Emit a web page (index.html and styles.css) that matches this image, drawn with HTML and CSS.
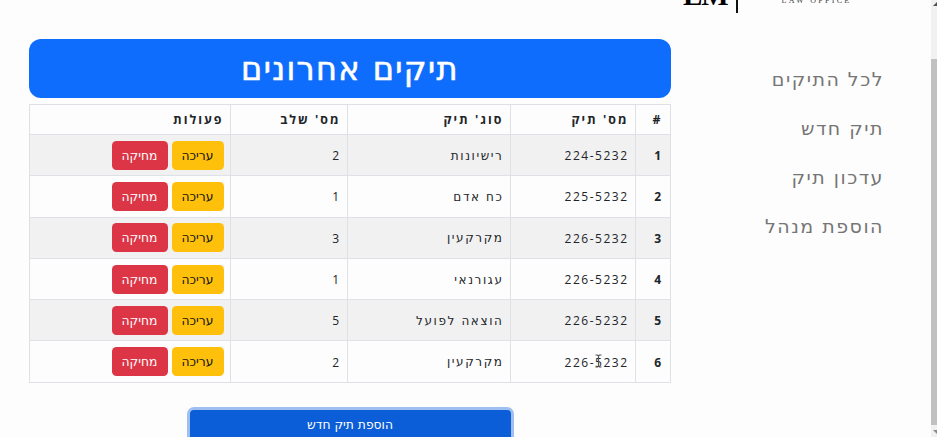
FILE: index.html
```html
<!DOCTYPE html>
<html lang="he" dir="rtl">
<head>
<meta charset="utf-8">
<title>תיקים אחרונים</title>
<link rel="stylesheet" href="styles.css">
</head>
<body>
<div class="viewport">
  <div class="page">
    <aside class="sidebar">
      <div class="logo" dir="ltr">
        <span class="logo-mark">LM</span>
        <span class="logo-line"></span>
        <span class="logo-sub">LAW OFFICE</span>
      </div>
      <nav class="menu">
        <a>לכל התיקים</a>
        <a>תיק חדש</a>
        <a>עדכון תיק</a>
        <a>הוספת מנהל</a>
      </nav>
    </aside>
    <main class="content">
      <h1 class="title">תיקים אחרונים</h1>
      <table class="cases">
        <colgroup><col class="c-num"><col class="c-case"><col class="c-type"><col class="c-stage"><col class="c-actions"></colgroup>
        <thead>
          <tr><th>#</th><th>מס' תיק</th><th>סוג' תיק</th><th>מס' שלב</th><th>פעולות</th></tr>
        </thead>
        <tbody>
          <tr><th>1</th><td>224-5232</td><td class="kind">רישיונות</td><td>2</td><td><div class="actions"><button class="btn edit">עריכה</button><button class="btn delete">מחיקה</button></div></td></tr>
          <tr><th>2</th><td>225-5232</td><td class="kind">כח אדם</td><td>1</td><td><div class="actions"><button class="btn edit">עריכה</button><button class="btn delete">מחיקה</button></div></td></tr>
          <tr><th>3</th><td>226-5232</td><td class="kind">מקרקעין</td><td>3</td><td><div class="actions"><button class="btn edit">עריכה</button><button class="btn delete">מחיקה</button></div></td></tr>
          <tr><th>4</th><td>226-5232</td><td class="kind">עגורנאי</td><td>1</td><td><div class="actions"><button class="btn edit">עריכה</button><button class="btn delete">מחיקה</button></div></td></tr>
          <tr><th>5</th><td>226-5232</td><td class="kind">הוצאה לפועל</td><td>5</td><td><div class="actions"><button class="btn edit">עריכה</button><button class="btn delete">מחיקה</button></div></td></tr>
          <tr><th>6</th><td>226-5232</td><td class="kind">מקרקעין</td><td>2</td><td><div class="actions"><button class="btn edit">עריכה</button><button class="btn delete">מחיקה</button></div></td></tr>
        </tbody>
      </table>
      <button class="add">הוספת תיק חדש</button>
    </main>
  </div>
  <div class="scrollbar">
    <svg class="arrow-up" width="6" height="8" viewBox="0 0 6 8"><path d="M2 6 6 2V6Z" fill="#505050"/></svg>
    <div class="thumb"></div>
    <svg class="arrow-down" width="6" height="12" viewBox="0 0 6 12"><path d="M2 5H6V9Z" fill="#8a8a8a"/></svg>
  </div>
  <svg class="cursor" width="7" height="14" viewBox="0 0 7 14"><path d="M.5 1H2.5L3.5 2 4.5 1H6.5M3.5 2V12M.5 13H2.5L3.5 12 4.5 13H6.5" fill="none" stroke="#555" stroke-width="1.2"/></svg>
</div>
</body>
</html>
```
FILE: styles.css
```css
* { box-sizing: border-box; }
body {
  margin: 0;
  overflow: hidden;
  background: #fdfdfd;
  color: #212529;
  font-family: "Open Sans", "Noto Sans", sans-serif;
  font-size: 12px;
}
.viewport {
  position: relative;
  display: flex;
  direction: ltr;
  width: 937px;
  height: 437px;
  overflow: hidden;
}
.page {
  direction: rtl;
  flex: 1;
  display: flex;
  justify-content: space-between;
  padding-left: 29px;
}
.sidebar { width: 250px; }
.logo {
  display: flex;
  height: 13px;
  padding-left: 2px;
  font-family: "Liberation Serif", serif;
  color: #000;
}
.logo-mark {
  width: 53px;
  height: 26px;
  margin-top: -18px;
  font-size: 29px;
  font-weight: bold;
  letter-spacing: -1px;
  line-height: 26px;
}
.logo-line { width: 1.5px; background: #111; }
.logo-sub {
  margin: -5px 0 0 44px;
  height: 12px;
  line-height: 12px;
  font-size: 8px;
  letter-spacing: 2.3px;
  white-space: nowrap;
  color: #444;
}
.menu {
  display: flex;
  flex-direction: column;
  gap: 19px;
  padding: 51px 47px 0 0;
  font-family: "DejaVu Sans", sans-serif;
  font-size: 19px;
  letter-spacing: 1.5px;
  line-height: 30px;
  color: #757575;
}
.content { width: 642px; padding-top: 39px; }
.title {
  margin: 0 0 6px;
  height: 59px;
  border-radius: 12px;
  background: #0f6dfd;
  color: #fff;
  font-family: "DejaVu Sans", sans-serif;
  font-size: 32px;
  font-weight: 500;
  letter-spacing: 1.4px;
  line-height: 61px;
  text-align: center;
  -webkit-text-stroke: 0.6px #fff;
}
.cases {
  width: 642px;
  border-collapse: collapse;
  table-layout: fixed;
  letter-spacing: 1.5px;
}
.c-num { width: 35px; }
.c-case { width: 125px; }
.c-type { width: 163px; }
.c-stage { width: 117px; }
.cases th, .cases td {
  height: 41.3px;
  padding: 1px 6.5px 0 7.5px;
  border: 1px solid #dee2e6;
  text-align: right;
  vertical-align: middle;
}
.cases th:first-child { padding-right: 7.5px; }
.cases td:last-child { padding-top: 0; }
.cases thead th { height: 30px; padding-top: 0; font-size: 12.4px; letter-spacing: 2px; }
.cases .kind { font-family: "DejaVu Sans", sans-serif; font-size: 12px; letter-spacing: 1.6px; }
.cases tbody tr:nth-child(odd) { background: #f1f1f2; }
.actions { display: flex; gap: 4px; }
.btn {
  height: 29px;
  padding: 1px 0 0;
  border: 0;
  border-radius: 4.5px;
  font: 12.3px "DejaVu Sans", sans-serif;
}
.edit { width: 52px; background: #ffc00b; color: #111; }
.delete { width: 56px; background: #dc3546; color: #fff; }
.add {
  display: block;
  width: 321px;
  height: 30px;
  margin: 27px auto 0;
  border: 0;
  border-radius: 4px;
  background: #0b5ed7;
  box-shadow: 0 0 0 3px #9fbff2;
  color: #fff;
  font: 12.3px "DejaVu Sans", sans-serif;
}
.scrollbar {
  width: 6px;
  display: flex;
  flex-direction: column;
  background: #f1f1f1;
}
.thumb { height: 366px; margin-top: 51px; background: #c1c1c1; }
.cursor { position: absolute; left: 595px; top: 354px; }
```
